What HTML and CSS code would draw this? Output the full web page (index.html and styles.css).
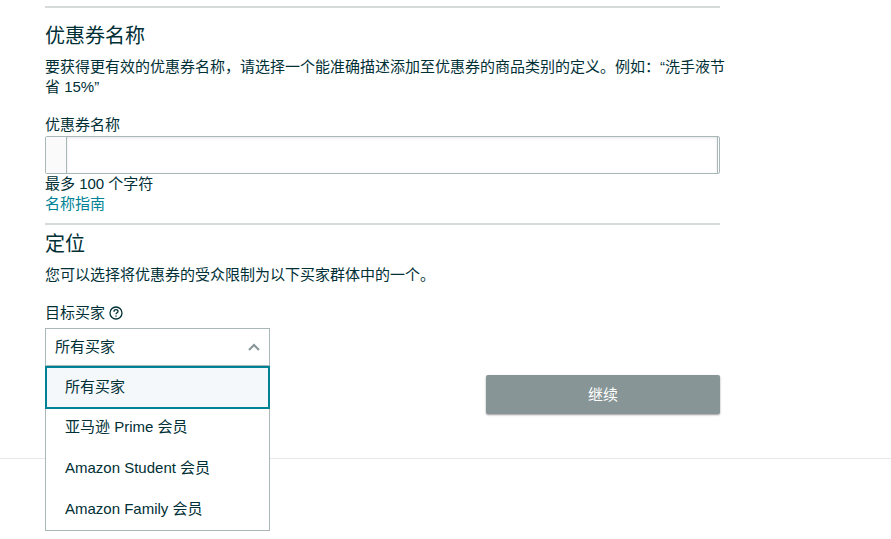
FILE: index.html
```html
<!DOCTYPE html>
<html lang="zh-CN">
<head>
<meta charset="utf-8">
<meta name="viewport" content="width=device-width, initial-scale=1">
<title>优惠券</title>
<link rel="stylesheet" href="styles.css">
</head>
<body>
<main class="page">
  <form class="form">
    <section class="section section-name">
      <h2 class="title">优惠券名称</h2>
      <p class="intro intro-wide">要获得更有效的优惠券名称，请选择一个能准确描述添加至优惠券的商品类别的定义。例如：“洗手液节<br>省 15%”</p>
      <label class="label" for="coupon-name">优惠券名称</label>
      <div class="input-group">
        <span class="prepend"></span>
        <input class="input" id="coupon-name" type="text" maxlength="100">
      </div>
      <div class="hint">最多 100 个字符</div>
      <a class="link" href="#">名称指南</a>
    </section>
    <section class="section section-target">
      <h2 class="title">定位</h2>
      <p class="intro">您可以选择将优惠券的受众限制为以下买家群体中的一个。</p>
      <div class="label-row">
        <label class="label" for="target">目标买家</label>
        <svg class="help" viewBox="0 0 14 14" aria-hidden="true">
          <circle cx="7" cy="7" r="6"/>
          <path d="M5 5.7C5 4.4 5.8 3.7 7 3.7S9 4.4 9 5.5C9 6.8 7 6.8 7 8.3M7 9.5V10.8"/>
        </svg>
      </div>
      <div class="dropdown">
        <select class="select" id="target">
          <option>所有买家</option>
          <option>亚马逊 Prime 会员</option>
          <option>Amazon Student 会员</option>
          <option>Amazon Family 会员</option>
        </select>
        <svg class="chevron" viewBox="0 0 12 8" aria-hidden="true"><path d="M1 7L6 2L11 7"/></svg>
        <ul class="menu" role="listbox" aria-label="目标买家">
          <li class="option option-active" role="option" aria-selected="true">所有买家</li>
          <li class="option" role="option">亚马逊 Prime 会员</li>
          <li class="option" role="option">Amazon Student 会员</li>
          <li class="option" role="option">Amazon Family 会员</li>
        </ul>
      </div>
    </section>
    <div class="actions">
      <button class="button" type="button">继续</button>
    </div>
  </form>
</main>
</body>
</html>
```
FILE: styles.css
```css
* {
  box-sizing: border-box;
}

body {
  min-height: 100vh;
  margin: 0;
  background: #fff;
  color: #002f36;
  font-family: "Liberation Sans", "Noto Sans CJK SC", sans-serif;
  font-size: 15px;
  line-height: 20px;
}

.page {
  padding: 6px 45px 44px;
  border-bottom: 1px solid #e7e7e7;
}

.form {
  max-width: 675px;
}

.section {
  display: flex;
  flex-direction: column;
  align-items: stretch;
  border-top: 2px solid #d5dbdb;
}

.section-name {
  padding: 15px 0 9px;
}

.section-target {
  padding-top: 6px;
}

.title {
  margin: 0 0 8px;
  font-size: 20px;
  font-weight: 400;
  line-height: 26px;
}

.intro {
  margin: 0 0 18px;
}

.intro-wide {
  white-space: nowrap;
}

.input-group {
  display: flex;
  height: 38px;
  margin-top: 1px;
  padding-right: 1px;
  border: 1px solid #aab7b8;
  border-radius: 2px;
}

.prepend {
  width: 20px;
  background: #fafafa;
}

.input {
  flex: 1;
  min-width: 0;
  padding: 0 10px;
  border: solid #aab7b8;
  border-width: 0 1px;
  background: #fff;
  box-shadow: inset 0 1px 3px rgba(0, 0, 0, 0.1);
  color: inherit;
  font: inherit;
  outline: none;
}

.link {
  align-self: flex-start;
  color: #008296;
  text-decoration: none;
}

.label-row {
  display: flex;
  align-items: center;
  gap: 4px;
  margin-bottom: 5px;
}

.help {
  width: 14px;
  height: 14px;
  fill: none;
  stroke: #002f36;
  stroke-width: 1.3;
}

.dropdown {
  position: relative;
  width: 225px;
}

.select {
  display: block;
  width: 100%;
  height: 38px;
  padding: 0 30px 0 9px;
  border: 1px solid #aab7b8;
  border-radius: 0;
  appearance: none;
  background: #fff;
  color: inherit;
  font: inherit;
  outline: none;
}

.chevron {
  position: absolute;
  top: 15px;
  right: 10px;
  width: 12px;
  height: 8px;
  fill: none;
  stroke: #879596;
  stroke-width: 2;
  pointer-events: none;
}

.menu {
  position: absolute;
  top: 37px;
  left: 0;
  z-index: 1;
  width: 100%;
  margin: 0;
  padding: 0;
  border: 1px solid #aab7b8;
  background: #fff;
  list-style: none;
}

.option {
  padding: 10px 19px 11px;
}

.option-active {
  margin: 0 -1px -2px;
  padding: 9px 18px 10px;
  border: 2px solid #008296;
  background: #f4f8fa;
}

.actions {
  display: flex;
  justify-content: flex-end;
  margin-top: 9px;
}

.button {
  width: 234px;
  height: 39px;
  padding: 0;
  border: 0;
  border-radius: 2px;
  background: #879596;
  box-shadow: 0 1px 2px rgba(0, 0, 0, 0.4);
  color: #fff;
  font: inherit;
}
```
